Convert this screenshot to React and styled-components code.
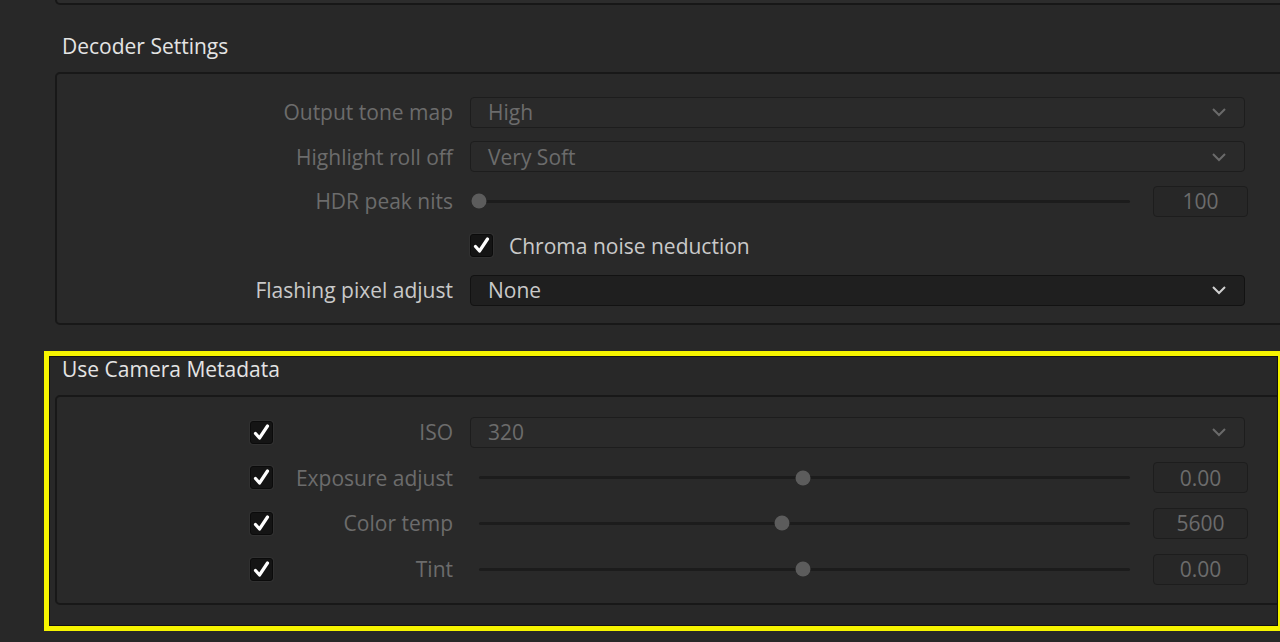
import React from "react";
import styled, { createGlobalStyle } from "styled-components";

const GlobalStyle = createGlobalStyle`
  html, body { margin: 0; padding: 0; background: #282828; overflow: hidden; }
  body { font-family: "Open Sans", "Noto Sans", sans-serif; }
`;

const Page = styled.div`
  width: 1280px;
  height: 642px;
  overflow: hidden;
  background: #282828;
  box-sizing: border-box;
  padding-left: 55px;
  display: flex;
  flex-direction: column;
  align-items: flex-start;
`;

const TopStub = styled.div`
  width: 1240px;
  height: 3px;
  flex: none;
  box-sizing: content-box;
  background: #2c2c2c;
  border: 2px solid #171717;
  border-top: none;
  border-radius: 0 0 5px 5px;
`;

const SectionTitle = styled.div`
  font-size: 21px;
  line-height: ${(p) => p.$lh}px;
  height: ${(p) => p.$lh}px;
  color: #e4e4e4;
  padding-left: ${(p) => p.$pad}px;
  margin-top: ${(p) => p.$mt}px;
  white-space: nowrap;
`;

const GroupBox = styled.div`
  width: 1240px;
  flex: none;
  box-sizing: border-box;
  border: 2px solid #181818;
  border-radius: 5px;
  background: #292929;
  margin-top: ${(p) => p.$mt}px;
  margin-left: ${(p) => p.$ml || 0}px;
  padding: ${(p) => p.$pt}px 0 ${(p) => p.$pb}px;
  display: flex;
  flex-direction: column;
  gap: ${(p) => p.$gap}px;
`;

const Highlight = styled.div`
  margin-left: -11px;
  margin-top: 26px;
  width: 1239px;
  flex: none;
  box-sizing: border-box;
  border: 5px solid #f6f400;
`;

const HighlightInner = styled.div`
  border: 1px solid #121212;
  overflow: hidden;
  padding-bottom: 20px;
`;

const Row = styled.div`
  display: grid;
  grid-template-columns: 396px 778px;
  column-gap: 17px;
  height: 32px;
  align-items: center;
`;

const LabelCell = styled.div`
  display: flex;
  align-items: center;
  justify-content: ${(p) => (p.$withCheck ? "space-between" : "flex-end")};
  padding-left: ${(p) => (p.$withCheck ? 193 : 0)}px;
  height: 100%;
`;

const Label = styled.span`
  font-size: 21px;
  color: ${(p) => (p.$enabled ? "#c9c9c9" : "#6c6c6c")};
  white-space: nowrap;
`;

const Select = styled.div`
  width: 775px;
  height: 31px;
  box-sizing: border-box;
  border: 1px solid ${(p) => (p.$enabled ? "#121212" : "#1d1d1d")};
  background: ${(p) => (p.$enabled ? "#1f1f1f" : "#2a2a2a")};
  border-radius: 4px;
  display: flex;
  align-items: center;
  justify-content: space-between;
  padding: 0 17px 0 17px;
  font-size: 21px;
  color: ${(p) => (p.$enabled ? "#c9c9c9" : "#6c6c6c")};
`;

const Chevron = ({ color }) => (
  <svg width="16" height="10" viewBox="0 0 16 10">
    <path d="M2 2 L8 8 L14 2" fill="none" stroke={color} strokeWidth="2" />
  </svg>
);

const SliderWrap = styled.div`
  display: grid;
  grid-template-columns: 660px 95px;
  column-gap: 23px;
  align-items: center;
`;

const TrackArea = styled.div`
  padding-left: 9px;
  height: 16px;
  display: flex;
  align-items: center;
`;

const Track = styled.div`
  position: relative;
  width: 651px;
  height: 3px;
  background: #1c1c1c;
  border-radius: 2px;
`;

const Knob = styled.div`
  position: absolute;
  top: 50%;
  width: 15px;
  height: 15px;
  border-radius: 50%;
  background: #5c5c5c;
  transform: translate(-50%, -50%);
`;

const NumberBox = styled.div`
  width: 95px;
  height: 31px;
  box-sizing: border-box;
  border: 1px solid #1d1d1d;
  background: #272727;
  border-radius: 4px;
  display: flex;
  align-items: center;
  justify-content: center;
  font-size: 21px;
  color: #6c6c6c;
`;

const CheckRow = styled.div`
  display: flex;
  align-items: center;
  gap: 16px;
`;

const Box = styled.div`
  width: 23px;
  height: 23px;
  box-sizing: border-box;
  background: #141414;
  border: 1px solid #0b0b0b;
  box-shadow: 0 0 0 1px #303030;
  border-radius: 3px;
  display: flex;
  align-items: center;
  justify-content: center;
  flex: none;
`;

const Check = () => (
  <Box>
    <svg width="17" height="17" viewBox="0 0 17 17">
      <path d="M2.5 9.5 L6.5 14 L14.5 2" fill="none" stroke="#ffffff" strokeWidth="3.2" strokeLinecap="round" strokeLinejoin="round" />
    </svg>
  </Box>
);

const SelectRow = ({ label, value, enabled, check }) => (
  <Row>
    <LabelCell $withCheck={check}>
      {check && <Check />}
      <Label $enabled={enabled}>{label}</Label>
    </LabelCell>
    <Select $enabled={enabled}>
      <span>{value}</span>
      <Chevron color={enabled ? "#cfcfcf" : "#6a6a6a"} />
    </Select>
  </Row>
);

const SliderRow = ({ label, value, pct, check }) => (
  <Row>
    <LabelCell $withCheck={check}>
      {check && <Check />}
      <Label>{label}</Label>
    </LabelCell>
    <SliderWrap>
      <TrackArea>
        <Track>
          <Knob style={{ left: `${pct}%` }} />
        </Track>
      </TrackArea>
      <NumberBox>{value}</NumberBox>
    </SliderWrap>
  </Row>
);

export default function App() {
  return (
    <>
      <GlobalStyle />
      <Page>
        <TopStub />
        <SectionTitle $lh={30} $mt={26} $pad={7}>Decoder Settings</SectionTitle>
        <GroupBox $mt={11} $pt={22} $pb={17} $gap={12.5}>
          <SelectRow label="Output tone map" value="High" />
          <SelectRow label="Highlight roll off" value="Very Soft" />
          <SliderRow label="HDR peak nits" value="100" pct={0} />
          <Row>
            <div />
            <CheckRow>
              <Check />
              <Label $enabled>Chroma noise neduction</Label>
            </CheckRow>
          </Row>
          <SelectRow label="Flashing pixel adjust" value="None" enabled />
        </GroupBox>
        <Highlight>
          <HighlightInner>
            <SectionTitle $lh={24} $mt={0} $pad={12}>Use Camera Metadata</SectionTitle>
            <GroupBox $mt={14} $ml={5} $pt={19} $pb={18} $gap={13.7}>
              <SelectRow check label="ISO" value="320" />
              <SliderRow check label="Exposure adjust" value="0.00" pct={49.8} />
              <SliderRow check label="Color temp" value="5600" pct={46.5} />
              <SliderRow check label="Tint" value="0.00" pct={49.8} />
            </GroupBox>
          </HighlightInner>
        </Highlight>
      </Page>
    </>
  );
}
